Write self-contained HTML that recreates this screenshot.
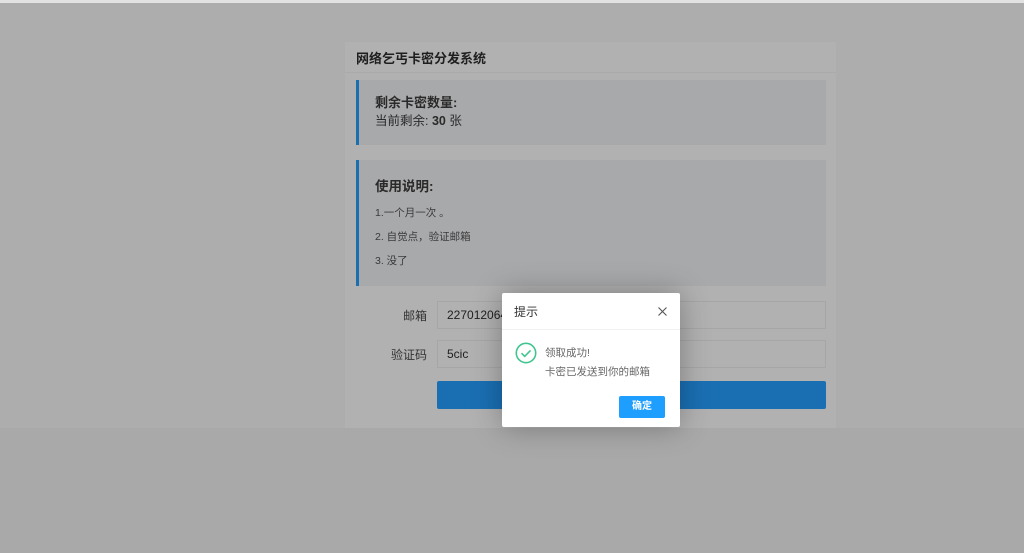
<!DOCTYPE html>
<html><head><meta charset="utf-8"><style>
*{margin:0;padding:0;box-sizing:border-box}
body{width:1024px;height:553px;background:#a9a9a9;font-family:"Liberation Sans","Noto Sans CJK SC",sans-serif;position:relative;overflow:hidden}
.top{position:absolute;left:0;top:0;width:1024px;height:3px;background:#e2e2e2}
.upper{position:absolute;left:0;top:3px;width:1024px;height:425px;background:#adadad}
.card{position:absolute;left:345px;top:42px;width:491px;height:386px;background:#b1b1b1}
.hd{height:31px;border-bottom:1px solid #aaaaaa;padding:6px 11px;font-size:13px;font-weight:bold;color:#1f1f1f}
.box{position:absolute;left:11px;width:470px;background:#a8a9ab;border-left:3px solid #1a6fb0;padding-left:16px;color:#2a2a2a}
.lbl{position:absolute;font-size:12px;color:#333;text-align:right;width:60px}
.inp{position:absolute;left:92px;width:389px;height:28px;border:1px solid #a6a6a6;background:#b1b1b1;font-size:12px;color:#1f1f1f;padding:6px 9px}
.btn{position:absolute;left:92px;top:339px;width:389px;height:28px;background:#1a6fb3;border-radius:2px}
.dlg{position:absolute;left:502px;top:293px;width:178px;height:134px;background:#fff;box-shadow:0 0 30px rgba(0,0,0,.3);border-radius:2px}
.dh{height:37px;border-bottom:1px solid #f0f0f0;padding:10px 12px;font-size:12px;color:#333}
.ok{position:absolute;left:117px;top:103px;width:46px;height:22px;background:#1e9fff;color:#fff;font-size:10px;font-weight:bold;text-align:center;line-height:22px;border-radius:2px}
</style></head><body>
<div class="top"></div><div class="upper"></div>
<div class="card">
<div class="hd">网络乞丐卡密分发系统</div>
<div class="box" style="top:38px;height:65px;padding-top:14px;font-size:12.5px;line-height:18px">
<div style="font-weight:bold;font-size:13px">剩余卡密数量:</div>
<div>当前剩余: <b>30</b> 张</div></div>
<div class="box" style="top:118px;height:126px;padding-top:15px">
<div style="font-weight:bold;font-size:13.5px;color:#2a2a2a">使用说明:</div>
<div style="font-size:10.5px;color:#3a3a3a;margin-top:6px;line-height:24px">1.一个月一次 。<br>2. 自觉点，验证邮箱<br>3. 没了</div></div>
<div class="lbl" style="left:22px;top:265px">邮箱</div>
<div class="inp" style="top:259px">22701206403@qq.com</div>
<div class="lbl" style="left:22px;top:304px">验证码</div>
<div class="inp" style="top:298px">5cic</div>
<div class="btn"></div>
</div>
<div class="dlg">
<div class="dh">提示</div>
<svg style="position:absolute;left:156px;top:14px" width="9" height="9" viewBox="0 0 9 9"><path d="M0.5 0.5l8 8M8.5 0.5l-8 8" stroke="#555" stroke-width="1.1"/></svg>
<svg style="position:absolute;left:13px;top:49px" width="22" height="22" viewBox="0 0 22 22"><circle cx="11" cy="11" r="9.7" fill="none" stroke="#3fc58f" stroke-width="1.6"/><path d="M6.5 11.2l3.2 3.2 5.8-6" fill="none" stroke="#3fc58f" stroke-width="1.6"/></svg>
<div style="position:absolute;left:43px;top:51px;font-size:10.5px;color:#666;line-height:19px">领取成功!<br>卡密已发送到你的邮箱</div>
<div class="ok">确定</div>
</div>
</body></html>
